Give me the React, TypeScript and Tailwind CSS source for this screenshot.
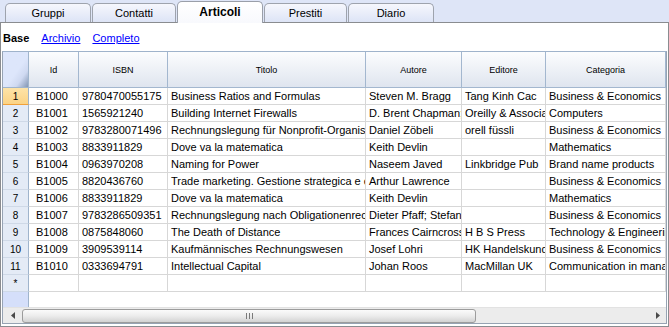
import React from "react";

// Righe della tabella Articoli
const ROWS: string[][] = [
  ["B1000", "9780470055175", "Business Ratios and Formulas", "Steven M. Bragg", "Tang Kinh Cac", "Business & Economics"],
  ["B1001", "1565921240", "Building Internet Firewalls", "D. Brent Chapman;Elizabeth D. Zwicky", "Oreilly & Associates", "Computers"],
  ["B1002", "9783280071496", "Rechnungslegung für Nonprofit-Organisationen", "Daniel Zöbeli", "orell füssli", "Business & Economics"],
  ["B1003", "8833911829", "Dove va la matematica", "Keith Devlin", "", "Mathematics"],
  ["B1004", "0963970208", "Naming for Power", "Naseem Javed", "Linkbridge Pub", "Brand name products"],
  ["B1005", "8820436760", "Trade marketing. Gestione strategica e operativa", "Arthur Lawrence", "", "Business & Economics"],
  ["B1006", "8833911829", "Dove va la matematica", "Keith Devlin", "", "Mathematics"],
  ["B1007", "9783286509351", "Rechnungslegung nach Obligationenrecht", "Dieter Pfaff; Stefan Ganz", "", "Business & Economics"],
  ["B1008", "0875848060", "The Death of Distance", "Frances Cairncross", "H B S Press", "Technology & Engineering"],
  ["B1009", "3909539114", "Kaufmännisches Rechnungswesen", "Josef Lohri", "HK Handelskunde", "Business & Economics"],
  ["B1010", "0333694791", "Intellectual Capital", "Johan Roos", "MacMillan UK", "Communication in management"],
];

const HEADERS = ["Id", "ISBN", "Titolo", "Autore", "Editore", "Categoria"];
const COLS = "grid grid-cols-[26px_50px_89px_198px_96px_84px_120px]";

const Tab: React.FC<{ label: string; width: string; active?: boolean }> = ({ label, width, active }) =>
  active ? (
    <div
      className={`${width} ml-[1px] h-[22px] -mb-px relative z-10 flex items-center justify-center pb-[2px] rounded-t-[5px] border border-b-0 border-[#9a9fa9] bg-linear-to-b from-white to-[#f8f9fd] text-[12px] font-bold text-black`}
    >
      {label}
    </div>
  ) : (
    <div
      className={`${width} ml-[1px] h-[19px] flex items-center justify-center pt-[1px] rounded-t-[5px] border border-b-0 border-[#9ea3ad] bg-linear-to-b from-[#f6f7fd] to-[#dde4f6] text-[11px] text-black`}
    >
      {label}
    </div>
  );

export default function App() {
  return (
    <div className="w-[669px] h-[327px] overflow-hidden bg-[#dee5f7] font-['Liberation_Sans',Arial,sans-serif] text-black">
      {/* Schede */}
      <div className="h-[22px] flex items-end pl-[4px]">
        <Tab label="Gruppi" width="w-[86px]" />
        <Tab label="Contatti" width="w-[84px]" />
        <Tab label="Articoli" width="w-[86px]" active />
        <Tab label="Prestiti" width="w-[83px]" />
        <Tab label="Diario" width="w-[86px]" />
      </div>

      {/* Pannello */}
      <div className="h-[305px] bg-white border border-[#8a8c90] px-px pb-[2px] flex flex-col">
        <div className="h-[28px] flex items-center gap-[12px] pl-px pt-[2px] text-[11px]">
          <span className="font-bold">Base</span>
          <span className="text-[#0000ff] underline">Archivio</span>
          <span className="text-[#0000ff] underline">Completo</span>
        </div>

        <div className="flex-1 flex flex-col border border-[#97a3b3] border-t-[#9fb3cb]">
          {/* Intestazione */}
          <div className={`${COLS} h-[36px]`}>
            <div className="border-r border-b border-[#9fb4cc] bg-linear-to-br from-[#dde6fb] from-55% via-[#cfd9f1] via-75% to-[#8497b4]" />
            {HEADERS.map((h) => (
              <div
                key={h}
                className="flex items-center justify-center pt-[3px] border-r border-b border-[#a3b7cf] bg-linear-to-b from-[#fcfdfe] to-[#dfe5ef] text-[9px]"
              >
                {h}
              </div>
            ))}
          </div>

          {/* Righe */}
          {ROWS.map((r, i) => (
            <div key={r[0]} className={`${COLS} h-[17px] text-[11px]`}>
              <div
                className={
                  i === 0
                    ? "flex items-center justify-center border-r border-b border-r-[#9fb4cc] border-b-[#f1a13a] bg-linear-to-b from-[#fde3a8] to-[#fbd385] text-[10px]"
                    : "flex items-center justify-center border-r border-b border-r-[#9fb4cc] border-b-[#cfd9e7] bg-[#e4ebf6] text-[10px]"
                }
              >
                {i + 1}
              </div>
              {r.map((c, j) => (
                <div
                  key={j}
                  className={`${j === 0 ? "pl-[7px]" : "pl-[3px]"} flex items-center overflow-hidden whitespace-nowrap border-r border-b border-[#d7d7d7]`}
                >
                  {c}
                </div>
              ))}
            </div>
          ))}

          {/* Riga nuova */}
          <div className={`${COLS} h-[17px]`}>
            <div className="flex items-center justify-center border-r border-b border-r-[#9fb4cc] border-b-[#cfd9e7] bg-[#e4ebf6] text-[10px]">
              *
            </div>
            {HEADERS.map((h) => (
              <div key={h} className="border-r border-b border-[#d7d7d7]" />
            ))}
          </div>

          {/* Area vuota */}
          <div className="h-[15px] flex">
            <div className="w-[26px] border-r border-[#9fb4cc] bg-[#d5dffa]" />
            <div className="flex-1" />
          </div>

          {/* Barra di scorrimento */}
          <div className="h-[16px] flex items-center bg-[#ececec] border-t border-[#e2e2e2]">
            <div className="w-[19px] flex items-center justify-center">
              <svg width="4" height="7" viewBox="0 0 4 7">
                <path d="M4 0 L0 3.5 L4 7 Z" fill="#4a4a4a" />
              </svg>
            </div>
            <div className="w-[454px] h-[14px] rounded-[3px] border border-[#9c9c9c] bg-linear-to-b from-[#fbfbfb] via-[#ececec] to-[#d2d2d2] flex items-center justify-center gap-[2px]">
              <span className="w-px h-[6px] bg-[#7a7a7a]" />
              <span className="w-px h-[6px] bg-[#7a7a7a]" />
              <span className="w-px h-[6px] bg-[#7a7a7a]" />
            </div>
            <div className="flex-1" />
            <div className="w-[17px] flex items-center justify-center">
              <svg width="4" height="7" viewBox="0 0 4 7">
                <path d="M0 0 L4 3.5 L0 7 Z" fill="#4a4a4a" />
              </svg>
            </div>
          </div>
        </div>
      </div>
    </div>
  );
}
